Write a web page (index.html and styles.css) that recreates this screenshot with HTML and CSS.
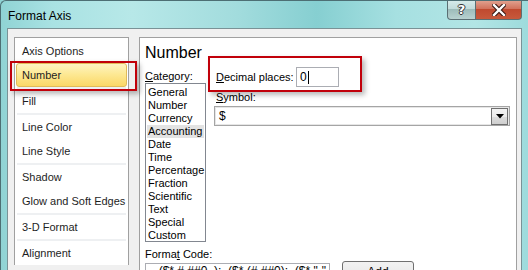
FILE: index.html
```html
<!DOCTYPE html>
<html>
<head>
<meta charset="utf-8">
<link rel="stylesheet" href="styles.css">
</head>
<body>
<div class="window">
  <div class="titlebar">
    <span class="title">Format Axis</span>
    <div class="caption">
      <div class="cbtn help">?</div>
      <div class="cbtn close">
        <svg width="14" height="12" viewBox="0 0 14 12"><path d="M2 1 L12 11 M12 1 L2 11" stroke="#3b1a14" stroke-width="4.5" stroke-linecap="square"/><path d="M2 1 L12 11 M12 1 L2 11" stroke="#fff" stroke-width="2.4" stroke-linecap="square"/></svg>
      </div>
    </div>
  </div>
  <div class="client">
    <div class="nav">
      <div class="item">Axis Options</div>
      <div class="item selected">Number</div>
      <div class="sep"></div>
      <div class="item">Fill</div>
      <div class="sep"></div>
      <div class="item">Line Color</div>
      <div class="item">Line Style</div>
      <div class="sep"></div>
      <div class="item">Shadow</div>
      <div class="item">Glow and Soft Edges</div>
      <div class="sep"></div>
      <div class="item">3-D Format</div>
      <div class="sep"></div>
      <div class="item">Alignment</div>
    </div>
    <div class="panel">
      <div class="heading">Number</div>
      <div class="body">
        <div class="catcol">
          <div class="label"><u>C</u>ategory:</div>
          <div class="listbox">
            <div class="li">General</div>
            <div class="li">Number</div>
            <div class="li">Currency</div>
            <div class="li active">Accounting</div>
            <div class="li">Date</div>
            <div class="li">Time</div>
            <div class="li">Percentage</div>
            <div class="li">Fraction</div>
            <div class="li">Scientific</div>
            <div class="li">Text</div>
            <div class="li">Special</div>
            <div class="li">Custom</div>
          </div>
        </div>
        <div class="optcol">
          <div class="decrow">
            <span class="declabel"><u>D</u>ecimal places:</span>
            <div class="numbox">0<span class="caret"></span></div>
          </div>
          <div class="label sym"><u>S</u>ymbol:</div>
          <div class="dropdown">
            <span class="dval">$</span>
            <div class="dbtn"><svg width="8" height="5" viewBox="0 0 8 5"><path d="M0 0 H8 L4 4.5 Z" fill="#000"/></svg></div>
          </div>
        </div>
      </div>
      <div class="label fclabel">Forma<u>t</u> Code:</div>
      <div class="fcrow">
        <div class="fcfield">_($* #,##0_);_($* (#,##0);_($* "-"_);_(@_)</div>
        <div class="addbtn">Add</div>
      </div>
    </div>
  </div>
</div>
<div class="mark mark-nav"></div>
<div class="mark mark-dec"></div>
</body>
</html>
```

FILE: styles.css
```css
html, body {
  margin: 0;
  padding: 0;
}
body {
  width: 528px;
  height: 270px;
  overflow: hidden;
  font-family: "Liberation Sans", Arial, sans-serif;
  font-size: 11px;
  color: #000;
  background: linear-gradient(90deg, #8fd3d4 0%, #a9e2e3 10%, #b7e8e8 25%, #a2dcdd 45%, #86cfd1 60%, #a6e0e1 75%, #b2e5e5 90%, #9ddbdc 100%);
  position: relative;
}
.window {
  display: flex;
  flex-direction: column;
  height: 270px;
  border-left: 1px solid #4d6f74;
  border-top: 1px solid #4d6f74;
  border-top-left-radius: 6px;
  box-sizing: border-box;
  overflow: hidden;
}
.titlebar {
  height: 27px;
  flex-shrink: 0;
  display: flex;
  align-items: flex-start;
}
.title {
  font-family: "Liberation Sans", Arial, sans-serif;
  font-size: 12px;
  padding-left: 7px;
  margin-top: 8px;
  color: #000;
}
.caption {
  margin-left: auto;
  margin-right: 6px;
  display: flex;
  margin-top: -1px;
}
.cbtn {
  height: 19px;
  border: 1px solid #5a6f73;
  border-top: none;
  display: flex;
  align-items: center;
  justify-content: center;
}
.help {
  width: 27px;
  border-bottom-left-radius: 4px;
  background: linear-gradient(#d8eceb 0%, #c2dcdb 45%, #9dbcba 50%, #b8d2d0 100%);
  color: #fff;
  font-family: "DejaVu Sans", sans-serif;
  font-weight: bold;
  font-size: 13px;
  text-shadow: 1px 0 0 #333, -1px 0 0 #333, 0 1px 0 #333, 0 -1px 0 #333;
}
.close {
  width: 45px;
  border-left: none;
  border-bottom-right-radius: 4px;
  background: linear-gradient(#e2a593 0%, #d2735d 45%, #c04a2f 50%, #c7593c 100%);
}
.client {
  flex: 1;
  min-height: 0;
  overflow: hidden;
  margin: 0 6px 0 6px;
  background: #f0f0f0;
  border: 1px solid #7a9296;
  border-bottom: none;
  padding: 8px 5px 0 6px;
  display: flex;
  align-items: flex-start;
  gap: 10px;
}
.nav {
  width: 115px;
  flex-shrink: 0;
  box-sizing: border-box;
  background: #fff;
  border: 1px solid #a0a0a0;
  border-bottom: none;
  padding: 1px 1px 0 1px;
  display: flex;
  flex-direction: column;
}
.item {
  height: 24px;
  flex-shrink: 0;
  line-height: 24px;
  padding-left: 6px;
  box-sizing: border-box;
  color: #1e1e1e;
  white-space: nowrap;
}
.item.selected {
  border: 1px solid #e0bb5a;
  border-radius: 3px;
  padding-left: 5px;
  line-height: 22px;
  background: linear-gradient(#fef3c3 0%, #fde995 45%, #fbd767 100%);
}
.sep {
  height: 2px;
  flex-shrink: 0;
  background: #eef0f2;
  margin: 0 1px;
}
.panel {
  flex: 1;
  background: #fff;
  border: 1px solid #a0a0a0;
  border-bottom: none;
  padding: 5px 6px 0 5px;
  display: flex;
  flex-direction: column;
}
.heading {
  font-size: 16px;
  line-height: 20px;
  height: 20px;
  flex-shrink: 0;
}
.body {
  display: flex;
  margin-top: 4px;
  flex-shrink: 0;
}
.catcol {
  width: 61px;
  display: flex;
  flex-direction: column;
}
.label {
  line-height: 14px;
  height: 14px;
  white-space: nowrap;
  flex-shrink: 0;
}
.catcol .label {
  margin-top: 2px;
}
.listbox {
  height: 159px;
  box-sizing: border-box;
  border: 1px solid #828790;
  padding: 2px 1px 0 1px;
}
.li {
  height: 13px;
  line-height: 13px;
  padding-left: 1px;
  white-space: nowrap;
}
.li.active {
  background: #e3e3e3;
}
.optcol {
  margin-left: 8px;
  flex: 1;
  display: flex;
  flex-direction: column;
}
.decrow {
  display: flex;
  align-items: center;
  height: 20px;
}
.declabel {
  width: 82px;
  padding-left: 2px;
  box-sizing: border-box;
  white-space: nowrap;
}
.numbox {
  width: 43px;
  height: 20px;
  box-sizing: border-box;
  border: 1px solid #abadb3;
  padding-left: 3px;
  line-height: 18px;
  font-size: 12px;
  display: flex;
  align-items: center;
}
.caret {
  width: 1px;
  height: 13px;
  background: #000;
  margin-left: 1px;
}
.label.sym {
  margin-top: 3px;
  padding-left: 2px;
}
.dropdown {
  margin-top: 2px;
  width: 296px;
  height: 20px;
  box-sizing: border-box;
  border: 1px solid #a5a5a5;
  box-shadow: inset 0 0 0 1px #e6e6e6;
  display: flex;
  align-items: center;
  justify-content: space-between;
}
.dval {
  padding-left: 4px;
  font-size: 12px;
}
.dbtn {
  width: 17px;
  height: 17px;
  box-sizing: border-box;
  border: 1px solid #707070;
  margin-right: 1px;
  background: linear-gradient(#f2f2f2 0%, #ebebeb 50%, #dddddd 51%, #cfcfcf 100%);
  display: flex;
  align-items: center;
  justify-content: center;
}
.fclabel {
  margin-top: 5px;
}
.fcrow {
  display: flex;
  align-items: flex-start;
  margin-top: 2px;
  flex-shrink: 0;
}
.fcfield {
  width: 185px;
  height: 22px;
  box-sizing: border-box;
  border: 1px solid #abadb3;
  padding: 0 0 0 6px;
  line-height: 14px;
  font-size: 12px;
  white-space: nowrap;
  overflow: hidden;
}
.addbtn {
  margin-left: 12px;
  margin-top: -2px;
  width: 72px;
  height: 23px;
  box-sizing: border-box;
  border: 1px solid #707070;
  border-radius: 3px;
  background: linear-gradient(#f2f2f2 0%, #ebebeb 50%, #dddddd 51%, #cfcfcf 100%);
  text-align: center;
  line-height: 20px;
  font-size: 12px;
}
.mark {
  position: absolute;
  border: 2px solid #c1000a;
  box-shadow: 3px 3px 5px rgba(0, 0, 0, 0.28);
  box-sizing: border-box;
}
.mark-nav {
  left: 10px;
  top: 61px;
  width: 127px;
  height: 30px;
}
.mark-dec {
  left: 208px;
  top: 56px;
  width: 154px;
  height: 36px;
}
```
